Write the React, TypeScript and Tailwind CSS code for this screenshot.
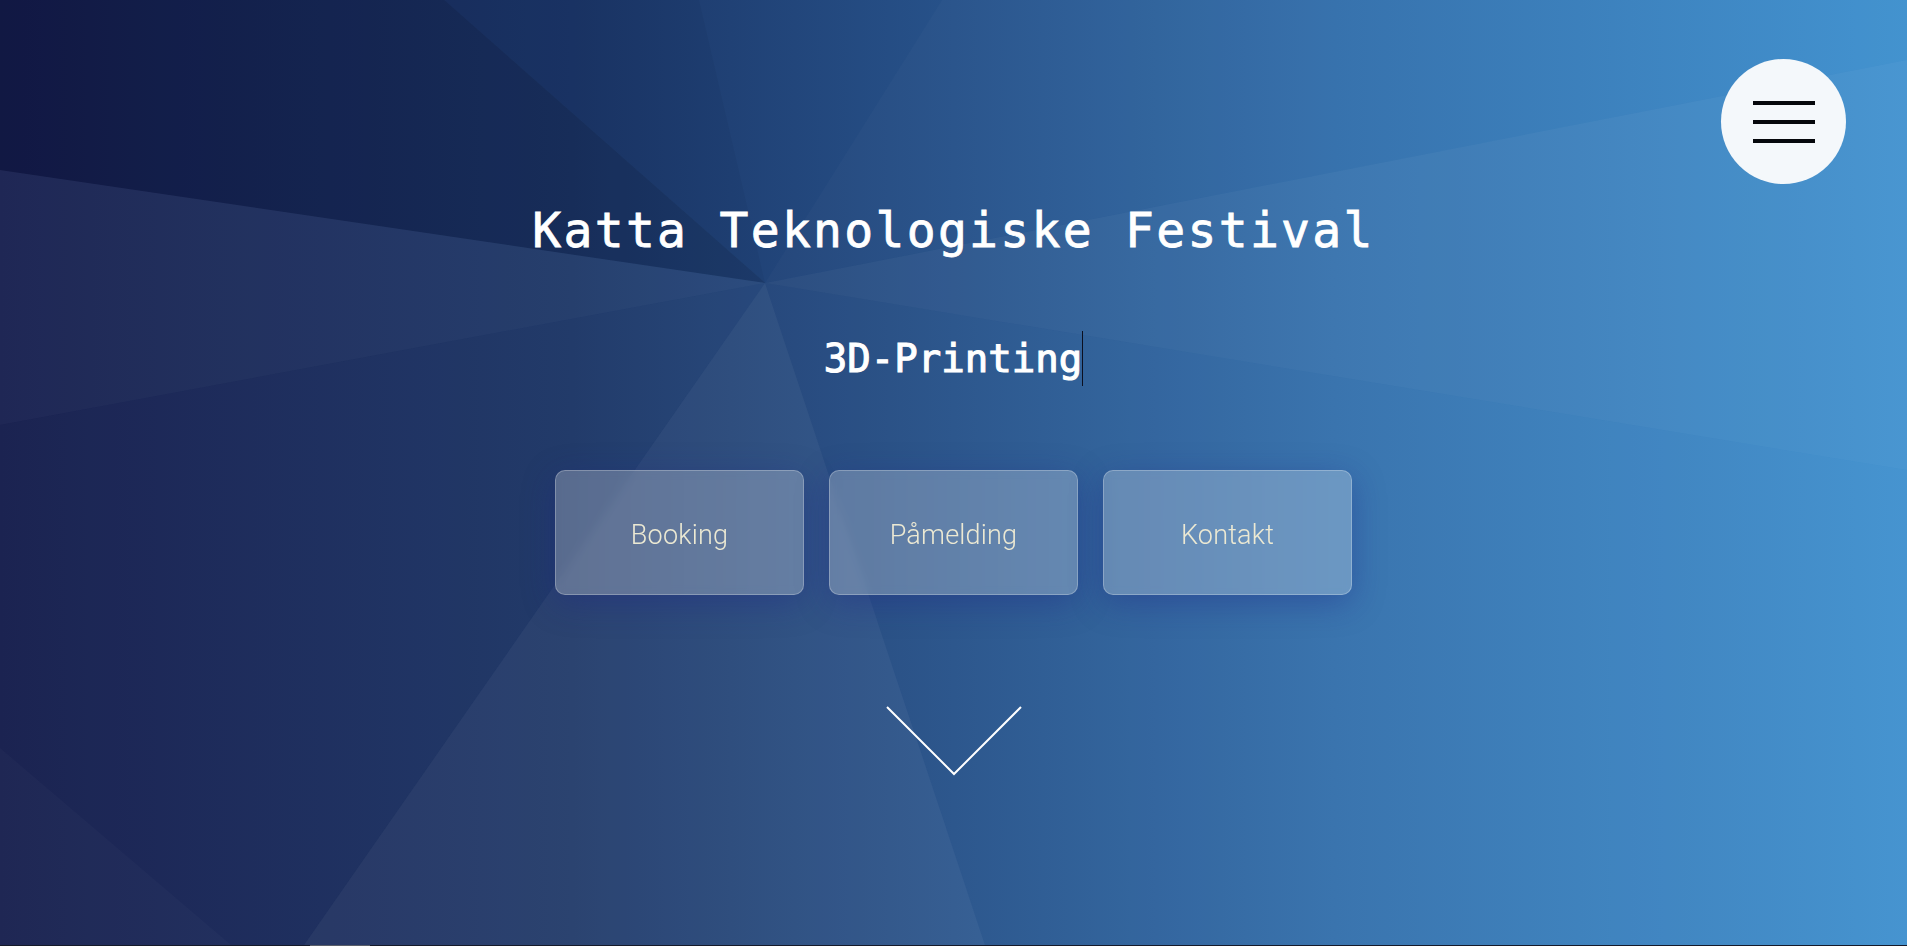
const C = { x: 765, y: 283 };

const wedges: { points: string; fill: string; opacity: number }[] = [
  // top-left corner, darkest
  { points: `${C.x},${C.y} 0,170 0,0 444,0`, fill: "#000010", opacity: 0.14 },
  { points: `${C.x},${C.y} 444,0 699,0`, fill: "#000010", opacity: 0.04 },
  { points: `${C.x},${C.y} 942,0 1907,0 1907,60`, fill: "#ffffff", opacity: 0.02 },
  { points: `${C.x},${C.y} 1907,60 1907,470`, fill: "#ffffff", opacity: 0.05 },
  { points: `${C.x},${C.y} 1907,470 1907,945 985,945`, fill: "#ffffff", opacity: 0.03 },
  { points: `${C.x},${C.y} 985,945 304,945`, fill: "#ffffff", opacity: 0.07 },
  { points: `${C.x},${C.y} 304,945 0,945 0,425`, fill: "#ffffff", opacity: 0.03 },
  { points: `${C.x},${C.y} 0,425 0,170`, fill: "#ffffff", opacity: 0.05 },
  { points: `0,748 231,945 0,945`, fill: "#ffffff", opacity: 0.02 },
];

function Backdrop() {
  return (
    <svg
      className="absolute inset-0 h-full w-full"
      viewBox="0 0 1907 945"
      preserveAspectRatio="none"
    >
      <defs>
        <linearGradient id="bg" x1="0" y1="0" x2="1" y2="0">
          <stop offset="0" stopColor="#141c4c" />
          <stop offset="0.3" stopColor="#1b3566" />
          <stop offset="0.5" stopColor="#27528a" />
          <stop offset="0.7" stopColor="#3470ac" />
          <stop offset="1" stopColor="#4091cf" />
        </linearGradient>
      </defs>
      <rect width="1907" height="945" fill="url(#bg)" />
      {wedges.map((w, i) => (
        <polygon key={i} points={w.points} fill={w.fill} fillOpacity={w.opacity} />
      ))}
    </svg>
  );
}

function MenuButton() {
  return (
    <button className="absolute top-[59px] right-[61px] flex h-[125px] w-[125px] flex-col items-center justify-center gap-[15px] rounded-full bg-[#f4f8fb]">
      <span className="block h-[4px] w-[62px] bg-[#05080c]" />
      <span className="block h-[4px] w-[62px] bg-[#05080c]" />
      <span className="block h-[4px] w-[62px] bg-[#05080c]" />
    </button>
  );
}

const links = ["Booking", "Påmelding", "Kontakt"];

export default function App() {
  return (
    <div className="w-full bg-[#161a29]">
      <section className="relative h-[945px] w-full overflow-hidden">
        <Backdrop />
        <div className="relative flex flex-col items-center pt-[206px]">
          <h1 className="font-['DejaVu_Sans_Mono',monospace] text-[48px] leading-[48px] font-normal tracking-[2.3px] text-white [-webkit-text-stroke:0.8px_white]">
            Katta Teknologiske Festival
          </h1>
          <p className="mt-[77px] font-['DejaVu_Sans_Mono',monospace] text-[39px] leading-[55px] font-normal text-white [-webkit-text-stroke:1.1px_white]">
            <span className="inline-block border-r border-[#0b0f1f]">3D-Printing</span>
          </p>
          <div className="mt-[84px] flex gap-[25px]">
            {links.map((l) => (
              <a
                key={l}
                href="#"
                className="flex h-[125px] w-[249px] items-center justify-center rounded-[10px] border border-white/25 bg-white/25 pt-[6px] font-['Roboto',sans-serif] text-[27px] font-light tracking-[0.2px] text-[#ece9d3] shadow-[0_8px_32px_rgba(31,38,135,0.37)] backdrop-blur-[4px]"
              >
                {l}
              </a>
            ))}
          </div>
          <svg className="mt-[110px]" width="138" height="72" viewBox="0 0 138 72">
            <polyline
              points="2,2 69,69 136,2"
              fill="none"
              stroke="white"
              strokeWidth="2"
            />
          </svg>
        </div>
        <MenuButton />
      </section>
      <div className="h-[200px] pl-[310px]">
        <div className="h-[1px] w-[60px] bg-[#5a5e68]" />
      </div>
    </div>
  );
}
